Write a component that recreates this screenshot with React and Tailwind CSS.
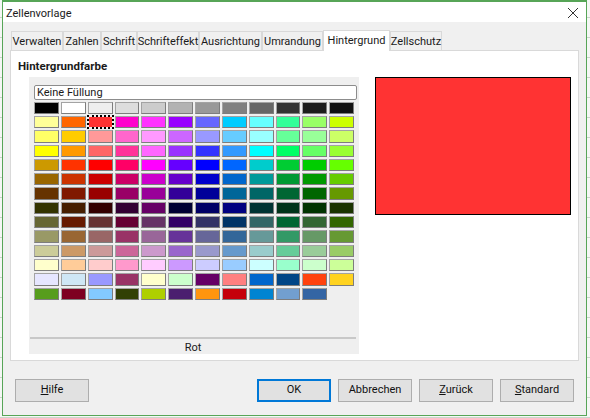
const TABS = [
  { label: 'Verwalten', width: 'w-[52px]' },
  { label: 'Zahlen', width: 'w-[38px]' },
  { label: 'Schrift', width: 'w-[36px]' },
  { label: 'Schrifteffekt', width: 'w-[62px]' },
  { label: 'Ausrichtung', width: 'w-[63px]' },
  { label: 'Umrandung', width: 'w-[61px]' },
  { label: 'Hintergrund', width: 'w-[67px]', active: true },
  { label: 'Zellschutz', width: 'w-[52px]' },
]

const COLORS = [
  '000000 ffffff eeeeee dddddd cccccc b2b2b2 999999 808080 666666 333333 1c1c1c 111111',
  'ffff99 ff6600 ff3333 ff00cc ff33ff 9900ff 6666ff 00ccff 66ffff 33ff99 99ff66 ccff00',
  'ffff66 ffcc00 ff9999 ff66cc ff99ff cc66ff 9999ff 66ccff 99ffff 66ff99 99ff99 ccff66',
  'ffff00 ff9900 ff6666 ff3399 ff66ff 9933ff 3333ff 3399ff 00ffff 00ff66 66ff66 99ff33',
  'cc9900 ff3300 ff0000 ff0066 ff00ff 6600ff 0000ff 0066ff 00cccc 00cc33 00cc00 66ff00',
  '996600 cc3300 cc0000 cc0066 cc00cc 6600cc 0000cc 0066cc 009999 009933 009900 66cc00',
  '663300 801900 990000 990066 990099 330099 000099 006699 006666 006633 006600 669900',
  '333300 461e00 330000 330033 660066 000033 000066 000080 003333 00331a 003300 1a3300',
  '666633 661a00 663333 660033 663366 330066 333366 003366 336666 006633 336633 336600',
  '999966 996633 996666 993366 996699 663399 666699 336699 669999 339966 669966 669933',
  'cccc99 cc9966 cc9999 cc6699 cc99cc 9966cc 9999cc 6699cc 99cccc 66cc99 99cc99 99cc66',
  'ffffcc ffcc99 ffcccc ff99cc ffccff cc99ff ccccff 99ccff ccffff 99ffcc ccffcc ccff99',
  'e6e6ff cfe7f5 9999ff 993366 ffffcc ccffcc 660066 ff8080 0066cc 004586 ff420e ffd320',
  '579d1c 7e0021 83caff 314004 aecf00 4b1f6f ff950e c5000b 0084d1 729fcf 3465a4',
].flatMap((row) => row.split(' '))

const SELECTED = 14

function Swatch({ color, selected }) {
  return (
    <div
      className={
        selected
          ? 'bg-clip-padding border-2 border-dotted border-black -m-px'
          : 'border border-[#a3a3a3] border-r-[#7d7d7d] border-b-[#7d7d7d]'
      }
      style={{ backgroundColor: `#${color}` }}
    />
  )
}

function DialogButton({ children, primary }) {
  return (
    <button
      className={[
        'w-[74px] h-[23px] text-[11px] text-[#111] bg-[#e1e1e1] border',
        primary ? 'border-2 border-[#0078d7]' : 'border-[#adadad]',
      ].join(' ')}
    >
      {children}
    </button>
  )
}

export default function App() {
  return (
    <div className="w-[590px] h-[418px] bg-[#f5f7f5] bg-[repeating-linear-gradient(0deg,#c9d6c9_0,#c9d6c9_1px,transparent_1px,transparent_20px)] overflow-hidden font-['Roboto',sans-serif] text-[#1a1a1a]">
      {/* Window */}
      <div className="ml-[2px] w-[585px] h-[416px] border border-t-2 border-[#57a557] flex flex-col bg-[#f0f0f0]">
        {/* Title bar */}
        <div className="h-[20px] shrink-0 bg-white flex items-center justify-between pl-[3px] pr-[7px] text-[11px] leading-none">
          <span className="relative top-[1px]">Zellenvorlage</span>
          <svg width="12" height="12" viewBox="0 0 12 12" className="relative top-[1px]">
            <path d="M1 1 L11 11 M11 1 L1 11" stroke="#333" strokeWidth="1" fill="none" />
          </svg>
        </div>

        {/* Tabs */}
        <div className="flex items-end h-[28px] shrink-0 pl-[8px] pb-0">
          {TABS.map(({ label, width, active }) => (
            <div
              key={label}
              className={[
                width,
                'shrink-0 flex items-center justify-center text-[11px] leading-none whitespace-nowrap border border-[#d9d9d9]',
                active ? 'h-[21px] bg-white border-b-0 -mb-px z-10 pb-[2px]' : 'h-[19px] bg-[#f0f0f0] border-b-0',
              ].join(' ')}
            >
              {label}
            </div>
          ))}
        </div>

        {/* Tab page */}
        <div className="ml-[7px] w-[569px] h-[311px] shrink-0 bg-white border border-[#d9d9d9] pt-[7px] pl-[7px]">
          <h2 className="text-[11.5px] font-bold leading-[16px]">Hintergrundfarbe</h2>
          <div className="flex mt-[3px] items-start">
            <div className="ml-[11px] w-[330px] h-[277px] bg-[#efefef] flex flex-col">
              <div className="ml-[5px] mt-[8px] w-[323px] h-[15px] bg-white border border-[#8c8c8c] rounded-[2px] pl-[2px] flex items-center text-[11px] leading-none">
                Keine Füllung
              </div>
              <div className="ml-[5px] mt-[1.7px] w-[320px] grid grid-cols-12 gap-x-[2px] gap-y-[2px] auto-rows-[12.3px]">
                {COLORS.map((color, i) => (
                  <Swatch key={i} color={color} selected={i === SELECTED} />
                ))}
              </div>
              <div className="mt-auto ml-[1px] w-[326px] border-t-2 border-[#c8c8c8] h-[17px] pt-[1px] flex items-center justify-center text-[11px] leading-none">
                Rot
              </div>
            </div>
            <div className="ml-[16px] w-[196px] h-[138px] bg-[#ff3333] border border-black" />
          </div>
        </div>

        {/* Buttons */}
        <div className="flex items-center mt-[18px] pl-[12px]">
          <DialogButton>
            <span className="underline">H</span>ilfe
          </DialogButton>
          <div className="ml-[168px] flex gap-[7px]">
            <DialogButton primary>OK</DialogButton>
            <DialogButton>Abbrechen</DialogButton>
            <DialogButton>
              <span className="underline">Z</span>urück
            </DialogButton>
            <DialogButton>
              <span className="underline">S</span>tandard
            </DialogButton>
          </div>
        </div>
      </div>
    </div>
  )
}
